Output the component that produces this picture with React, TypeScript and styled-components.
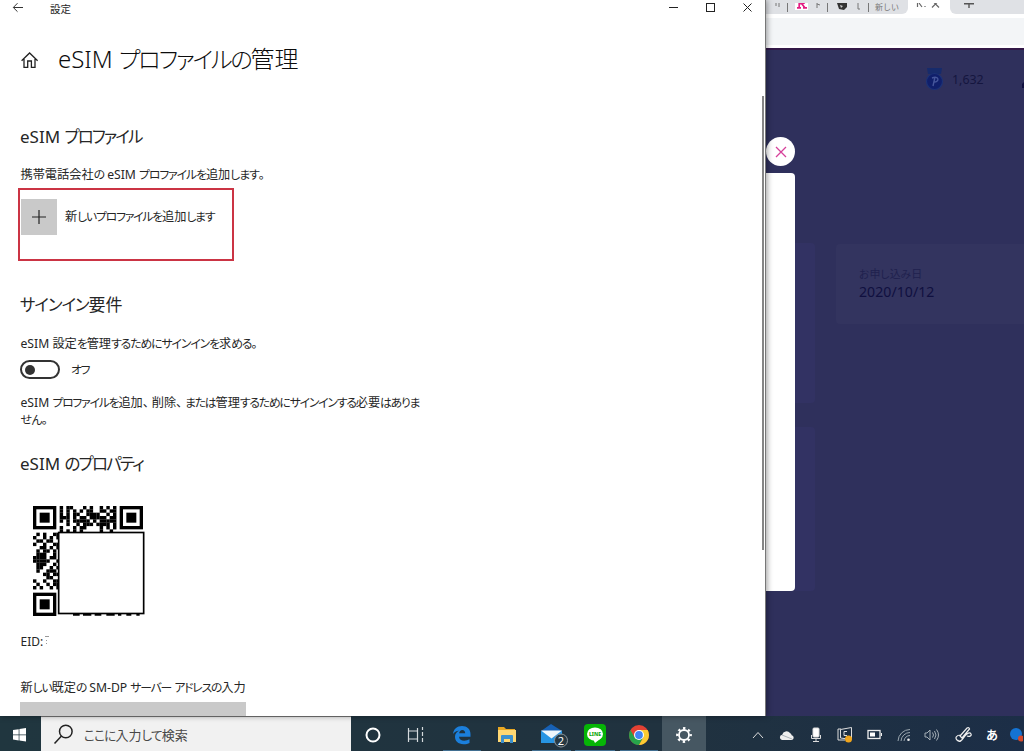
import React from "react";
import styled, { createGlobalStyle } from "styled-components";

const GlobalStyle = createGlobalStyle`
  * { box-sizing: border-box; }
  body { margin: 0; overflow: hidden; background: #fff; }
`;

const Screen = styled.div`
  width: 1024px;
  height: 751px;
  display: flex;
  flex-direction: column;
  overflow: hidden;
  font-family: "Noto Sans", "Noto Sans CJK JP", sans-serif;
  color: #262626;
`;

const Desktop = styled.div`
  height: 716px;
  display: flex;
`;

/* ---------- Japanese text with narrow kana ---------- */

const Line = styled.div<{ $size: number; $line: number; $weight?: number; $top?: number; $left?: number; $color?: string }>`
  font-size: ${(p) => p.$size}px;
  line-height: ${(p) => p.$line}px;
  height: ${(p) => p.$line}px;
  font-weight: ${(p) => p.$weight ?? 400};
  margin-top: ${(p) => p.$top ?? 0}px;
  margin-left: ${(p) => p.$left ?? 0}px;
  color: ${(p) => p.$color ?? "inherit"};
  white-space: pre;
`;

const Kana = styled.span<{ $tight: number }>`
  font-size: 0.97em;
  font-feature-settings: "palt";
  letter-spacing: ${(p) => p.$tight}em;
`;

const Stop = styled.span`
  letter-spacing: -0.27em;
`;

type CopyProps = {
  text: string;
  size: number;
  line: number;
  tight?: number;
  weight?: number;
  top?: number;
  left?: number;
  color?: string;
};

function Copy({ text, size, line, tight = -0.1, weight, top, left, color }: CopyProps) {
  const runs = text.split(/([\u3040-\u30ff]+|[、。]+)/);
  return (
    <Line $size={size} $line={line} $weight={weight} $top={top} $left={left} $color={color}>
      {runs.map((run, i) => {
        if (i % 2 === 0) return run;
        return /[、。]/.test(run) ? <Stop key={i}>{run}</Stop> : <Kana key={i} $tight={tight}>{run}</Kana>;
      })}
    </Line>
  );
}

/* ---------- Settings window ---------- */

const Window = styled.section`
  position: relative;
  z-index: 1;
  width: 766px;
  height: 716px;
  background: #fff;
  border-right: 1px solid #777;
  box-shadow: 1px 0 6px rgba(0, 0, 0, 0.4);
  display: flex;
  flex-direction: column;
  overflow: visible;
`;

const TitleBar = styled.header`
  height: 20px;
  display: flex;
  padding-left: 12px;
  align-items: flex-start;
`;

const WindowControls = styled.div`
  margin-left: auto;
  display: flex;
  gap: 26px;
  padding: 2px 12px 0 0;
`;

const WindowBody = styled.div`
  display: flex;
  flex: 1;
`;

const Content = styled.main`
  width: 761px;
  height: 696px;
  padding-left: 20px;
  overflow: hidden;
`;

const ScrollThumb = styled.div`
  width: 2px;
  height: 454px;
  margin: 76px 0 0 1px;
  background: #858585;
`;

const PageHead = styled.div`
  display: flex;
  height: 40px;
  margin-top: 19px;
`;

const Highlight = styled.div`
  width: 216px;
  height: 73px;
  margin: 5px 0 0 -2px;
  border: 2px solid #cb3444;
  display: flex;
  padding: 9px 0 0 1px;
`;

const AddTile = styled.div`
  width: 36px;
  height: 36px;
  background: #c9c9c9;
  display: flex;
  align-items: center;
  justify-content: center;
`;

const ToggleRow = styled.div`
  display: flex;
  height: 20px;
  margin-top: 8px;
`;

const Toggle = styled.div`
  width: 40px;
  height: 19px;
  border: 2px solid #333;
  border-radius: 10px;
  display: flex;
  align-items: center;
  padding-left: 3px;
`;

const Knob = styled.i`
  width: 10px;
  height: 10px;
  border-radius: 50%;
  background: #333;
`;

const QrWrap = styled.div`
  height: 111px;
  margin: 30px 0 0 13px;
`;

const EidRow = styled.div`
  display: flex;
  align-items: flex-start;
  margin-top: 16px;
`;

const Field = styled.div`
  width: 226px;
  height: 15px;
  margin-top: 6px;
  background: #c9c9c9;
`;

const TOP_STRIP = [
  "#.##...#.#..#.#.#",
  "#.#.#.#.##..##.##",
  "#.#.##..####..#.#",
  "###.#.##.#####.##",
  "#.#.#####.#.#####",
  "..#..#.###.####.#",
  "#...#.##....#.#.#",
  "#.#.#.#.....#..#.",
];
const LEFT_STRIP = [
  ".#.#..##", "#..#.#.#", ".##.##..", "#..#..##", "..##.#.#", ".#.##.#.", ".###..#.", "####.##.",
  "#####..#", ".###..#.", ".##..#.#", ".#..###.", "...##.##", "....##..", "#..#..##", ".#..#.##", "#.#..#.#",
];

function Modules({ rows, x, y }: { rows: string[]; x: number; y: number }) {
  return (
    <>
      {rows.flatMap((row, r) =>
        [...row].map((c, i) => (c === "#" ? <rect key={`${r}-${i}`} x={x + i} y={y + r} width="1.03" height="1.03" /> : null))
      )}
    </>
  );
}

function Finder({ x, y }: { x: number; y: number }) {
  return (
    <g>
      <rect x={x + 0.5} y={y + 0.5} width="6" height="6" fill="none" stroke="#000" />
      <rect x={x + 2} y={y + 2} width="3" height="3" />
    </g>
  );
}

function QrCode() {
  return (
    <svg width="112" height="110" viewBox="0 0 33.6 33">
      <Finder x={0} y={0} />
      <Finder x={26} y={0} />
      <Finder x={0} y={26} />
      <Modules rows={TOP_STRIP} x={8} y={0} />
      <Modules rows={LEFT_STRIP} x={0} y={8} />
      <rect x="7.7" y="7.95" width="25.5" height="24.3" fill="#fff" stroke="#000" strokeWidth="0.5" />
      <path d="M12 32.6h2M15 32.6h2.5M18.5 32.6h2M22 32.6h2.5M25.5 32.6h1M28 32.6h1.5M31 32.6h1" stroke="#000" strokeWidth="0.6" />
    </svg>
  );
}

/* ---------- Browser behind ---------- */

const Browser = styled.section`
  width: 258px;
  height: 716px;
  background: #2f305c;
  overflow: hidden;
`;

const Tabs = styled.div`
  height: 14px;
  background: #fff;
  display: flex;
  color: #777;
`;

const TabGroup = styled.div<{ $w: number; $side: "left" | "right" }>`
  width: ${(p) => p.$w}px;
  height: 14px;
  background: #dfe1e5;
  border-radius: ${(p) => (p.$side === "left" ? "0 0 6px 0" : "0 0 0 6px")};
  overflow: hidden;
`;

const ActiveTab = styled.div`
  width: 42px;
`;

const AddressBar = styled.div`
  height: 34px;
  background: #f3f5f7;
  border-top: 4px solid #fff;
  border-bottom: 3px solid #fff;
`;

const Page = styled.div`
  height: 668px;
  border-top: 2px solid #331848;
  display: flex;
`;

const ModalColumn = styled.div`
  width: 49px;
  padding-top: 87px;
`;

const CloseBadge = styled.div`
  width: 29px;
  height: 29px;
  border-radius: 50%;
  background: #fff;
  display: flex;
  align-items: center;
  justify-content: center;
`;

const ModalRow = styled.div`
  display: flex;
  margin-top: 7px;
`;

const ModalSheet = styled.div`
  width: 29px;
  height: 418px;
  flex: none;
  background: #fff;
  border-radius: 0 4px 4px 0;
`;

const DimCards = styled.div`
  width: 20px;
  padding-top: 70px;
`;

const DimCard = styled.div<{ $h: number; $gap: number }>`
  height: ${(p) => p.$h}px;
  margin-bottom: ${(p) => p.$gap}px;
  background: #323263;
  border-radius: 0 4px 4px 0;
`;

const InfoColumn = styled.div`
  width: 209px;
  padding-top: 15px;
`;

const Points = styled.div`
  display: flex;
  height: 28px;
  padding-left: 110px;
`;

const PointsValue = styled.span`
  width: 42px;
  font-size: 12.4px;
  line-height: 29px;
  color: #15163f;
  margin-left: 7px;
`;

const InfoCard = styled.div`
  height: 80px;
  margin: 151px 0 0 21px;
  padding: 21px 0 0 23px;
  background: #33345f;
  border-radius: 4px 0 0 4px;
`;

const InfoDate = styled.div`
  font-size: 14.1px;
  line-height: 19px;
  letter-spacing: 0.05px;
  color: #10103f;
`;

/* ---------- Taskbar ---------- */

const Taskbar = styled.footer`
  height: 35px;
  display: flex;
  background: linear-gradient(90deg, #20363f, #20323f 65%, #1c2e47);
`;

const StartButton = styled.div`
  display: flex;
  width: 41px;
  padding: 12px 0 0 13px;
`;

const SearchBox = styled.div`
  width: 310px;
  background: #f1f1f1;
  border-top: 1px solid #777;
  display: flex;
  padding-left: 12px;
`;

const AppSlot = styled.div<{ $w: number; $active?: boolean; $running?: boolean }>`
  width: ${(p) => p.$w}px;
  height: 35px;
  flex: none;
  display: flex;
  align-items: center;
  justify-content: center;
  padding-top: 2px;
  background: ${(p) => (p.$active ? "#465762" : "transparent")};
  box-shadow: ${(p) => (p.$running ? "inset 0 -1px #416f91" : "none")};
`;

const Tray = styled.div`
  display: flex;
  width: 318px;
  overflow: hidden;
`;

const TraySlot = styled.div<{ $w: number }>`
  width: ${(p) => p.$w}px;
  height: 35px;
  flex: none;
  display: flex;
  align-items: center;
  justify-content: center;
  padding-top: 3px;
  color: #fff;
  font-size: 12px;
  font-weight: 700;
`;

export default function App() {
  return (
    <Screen>
      <GlobalStyle />
      <Desktop>
        <Window>
          <TitleBar>
            <svg width="12" height="14" viewBox="0 0 12 14" fill="none" stroke="#333">
              <path d="M11 7.5H1.5M5.5 3.2 1.3 7.5l4.2 4.2" />
            </svg>
            <Copy text="設定" size={10.5} line={18} left={26} />
            <WindowControls>
              <svg width="11" height="11" fill="none" stroke="#222"><path d="M1 5.5h9" /></svg>
              <svg width="11" height="11" fill="none" stroke="#222"><rect x="1.5" y="1.5" width="8" height="8" /></svg>
              <svg width="11" height="11" fill="none" stroke="#222"><path d="m1.5 1.5 8 8m0-8-8 8" /></svg>
            </WindowControls>
          </TitleBar>
          <WindowBody>
            <Content>
              <PageHead>
                <svg width="19" height="40" viewBox="0 0 19 40" fill="none" stroke="#222" strokeWidth="1.3">
                  <path d="m1.6 21.8 8-7.8 8 7.8M4 20v8.4h3.7V22h3.7v6.4H15V20" />
                </svg>
                <Copy text="eSIM プロファイルの管理" size={24} line={40} weight={300} left={19} tight={-0.095} color="#0c0c0c" />
              </PageHead>
              <Copy text="eSIM プロファイル" size={17} line={24} top={46} tight={-0.115} />
              <Copy text="携帯電話会社の eSIM プロファイルを追加します。" size={12.2} line={18} top={16} left={0.5} tight={-0.09} />
              <Highlight>
                <AddTile>
                  <svg width="16" height="16" fill="none" stroke="#222" strokeWidth="1.2"><path d="M1 8h14M8 1v14" /></svg>
                </AddTile>
                <Copy text="新しいプロファイルを追加します" size={12.2} line={35} left={8} />
              </Highlight>
              <Copy text="サインイン要件" size={17} line={24} top={32} tight={-0.065} />
              <Copy text="eSIM 設定を管理するためにサインインを求める。" size={12.2} line={18} top={17} left={0.5} tight={-0.09} />
              <ToggleRow>
                <Toggle><Knob /></Toggle>
                <Copy text="オフ" size={12.2} line={19} left={11} />
              </ToggleRow>
              <Copy text="eSIM プロファイルを追加、削除、または管理するためにサインインする必要はありま" size={12.2} line={17} top={14} left={0.5} />
              <Copy text="せん。" size={12.2} line={17} left={0.5} tight={-0.05} />
              <Copy text="eSIM のプロパティ" size={17} line={24} top={24} tight={-0.11} />
              <QrWrap><QrCode /></QrWrap>
              <EidRow>
                <Copy text="EID:" size={12} line={18} left={0.5} />
                <svg width="8" height="14" fill="none" stroke="#999"><path d="M2 3.5h4M3.5 7v1M3.5 10v1" /></svg>
              </EidRow>
              <Copy text="新しい既定の SM-DP サーバー アドレスの入力" size={12.2} line={18} top={27} left={0.5} />
              <Field />
            </Content>
            <ScrollThumb />
          </WindowBody>
        </Window>
        <Browser>
          <Tabs>
            <TabGroup $w={142} $side="left">
              <svg width="142" height="14">
                <g stroke="#777" fill="none">
                  <path d="M10 0v3M13 0v4M21.500 0v9M61.500 0v9M102.500 0v9M51 0v5M51 1l3 1M92 0v6h2" />
                </g>
                <rect x="29" y="0" width="13" height="7" fill="#fff" />
                <path d="M31 4.800h4M37 4.800h4M33.200 0v4.500M35.500 .5 38.700 4.500M33 .7h3.500q2-.2 2-1.500" fill="none" stroke="#e21d82" strokeWidth="1.7" />
                <path d="M71 0h10v4l-3 3-5-1z" fill="#333" />
                <path d="m74 2 3 1-2 2z" fill="#ccc" />
                <text x="109" y="7" fontSize="8" fill="#777">新しい</text>
              </svg>
            </TabGroup>
            <ActiveTab>
              <svg width="42" height="14" fill="none" stroke="#666">
                <path d="M9.500 0v4M11 0l3 4M17 3v1M24 4.500l6-6M31 4.500l-6-6" strokeWidth="1.2" />
              </svg>
            </ActiveTab>
            <TabGroup $w={74} $side="right">
              <svg width="40" height="14" stroke="#555" strokeWidth="1.4"><path d="M14 .7h10M19 0v5" /></svg>
            </TabGroup>
          </Tabs>
          <AddressBar />
          <Page>
            <ModalColumn>
              <CloseBadge>
                <svg width="12" height="12" stroke="#d6409a" strokeWidth="1.3"><path d="m1 1 10 10M11 1 1 11" /></svg>
              </CloseBadge>
              <ModalRow>
                <ModalSheet />
                <DimCards>
                  <DimCard $h={160} $gap={24} />
                  <DimCard $h={164} $gap={0} />
                </DimCards>
              </ModalRow>
            </ModalColumn>
            <InfoColumn>
              <Points>
                <svg width="20" height="28" viewBox="0 0 20 28">
                  <path d="M2 3h15l-1 6H3z" fill="#172b6b" />
                  <circle cx="9.500" cy="16.500" r="8" fill="#101f6b" stroke="#1c3277" strokeWidth="1.2" />
                  <path d="M8 21l2-9M7 13c7-3 8 4 2 4" fill="none" stroke="#46569b" strokeWidth="1.4" />
                </svg>
                <PointsValue>1,632</PointsValue>
                <svg width="30" height="28"><path d="M28 23v-4l3-3v7z" fill="#10103f" /></svg>
              </Points>
              <InfoCard>
                <Copy text="お申し込み日" size={11} line={17} color="#20214e" tight={0.02} />
                <InfoDate>2020/10/12</InfoDate>
              </InfoCard>
            </InfoColumn>
          </Page>
        </Browser>
      </Desktop>
      <Taskbar>
        <StartButton>
          <svg width="14" height="14" fill="#fff">
            <path d="M0 2 5.700 1.200V6.500H0zM6.400 1.100 13 0v6.500H6.400zM0 7.200h5.700v5.200L0 11.600zM6.400 7.200H13v6.300l-6.600-1z" />
          </svg>
        </StartButton>
        <SearchBox>
          <svg width="20" height="34" fill="none" stroke="#222" strokeWidth="1.5">
            <circle cx="12.800" cy="14.500" r="6.300" /><path d="m8.500 19-7 7.500" />
          </svg>
          <Copy text="ここに入力して検索" size={13} line={36} left={11} color="#484848" tight={-0.065} />
        </SearchBox>
        <AppSlot $w={43}>
          <svg width="18" height="18"><circle cx="9" cy="9" r="6.500" fill="none" stroke="#fff" strokeWidth="2" /></svg>
        </AppSlot>
        <AppSlot $w={43}>
          <svg width="20" height="16" fill="none" stroke="#d5dadd" strokeWidth="1.200">
            <path d="M2.500 1v3h9V1M2.500 15v-3h9v3M2.500 4v8M11.500 4v8M16.500 0v3M16.500 5v4M16.500 11v4" />
          </svg>
        </AppSlot>
        <AppSlot $w={6} />
        <AppSlot $w={38} $running>
          <svg width="20" height="20" viewBox="0 0 20 20">
            <path d="M1 9C1.500 4 5 1 10 1c5 0 8.500 3.200 8.500 8v2.700H7c.2 2.800 2.400 4 5.200 4 2 0 3.800-.5 5.300-1.400v3.600C16 18.700 14 19.200 11.500 19.200 6 19.200 3 16 3 11.800 3 9 4.500 7 7 5.800 4.500 5.700 2.300 7 1 9zm6.100-.7h6.100C13.200 6.500 12.200 5 10.300 5 8.500 5 7.400 6.500 7.100 8.300z" fill="#1b7fdc" />
          </svg>
        </AppSlot>
        <AppSlot $w={51}>
          <svg width="20" height="18">
            <path d="M1 1h6l2 2h9v13H1z" fill="#e9a823" /><path d="M1 4h18v12H1z" fill="#ffd873" />
            <path d="M4 17V10q0-1 1-1h10q1 0 1 1v7h-3v-4H7v4z" fill="#3c91cf" />
          </svg>
        </AppSlot>
        <AppSlot $w={39} $running>
          <svg width="32" height="28" viewBox="-4 0 32 28">
            <path d="m1 10 10-7 11 7v12H1z" fill="#1761b5" /><path d="M1 10h21v12H1z" fill="#2795e3" />
            <path d="M1 9.500h21l-10.500 8z" fill="#eef7fc" />
            <circle cx="21" cy="19.500" r="6.500" fill="#263842" stroke="#8b969c" />
            <text x="21" y="23.500" textAnchor="middle" fontSize="11" fill="#fff">2</text>
          </svg>
        </AppSlot>
        <AppSlot $w={4} />
        <AppSlot $w={40} $running>
          <svg width="22" height="22">
            <rect width="22" height="22" rx="4" fill="#06b506" />
            <ellipse cx="11" cy="10" rx="8" ry="6.600" fill="#fff" /><path d="M9 15h7l-5 4z" fill="#fff" />
            <text x="11" y="12.200" textAnchor="middle" fontSize="5.200" fontWeight="800" fill="#06a506">LINE</text>
          </svg>
        </AppSlot>
        <AppSlot $w={5} />
        <AppSlot $w={38} $running>
          <svg width="22" height="22" viewBox="-11 -11 22 22">
            <circle r="10" fill="#e34133" />
            <path d="M-8.660-5A10 10 0 0 0 0 10L4.330 2.500 0 0-4.330 2.500z" fill="#27a34b" />
            <path d="M8.660-5A10 10 0 0 1 0 10L4.330 2.500 0-5z" fill="#fccb32" />
            <circle r="5" fill="#fff" /><circle r="3.900" fill="#4285f4" />
          </svg>
        </AppSlot>
        <AppSlot $w={4} />
        <AppSlot $w={44} $active>
          <svg width="18" height="18" viewBox="-9 -9 18 18" fill="none" stroke="#fff">
            <circle r="5" strokeWidth="1.800" /><circle r="6.700" strokeWidth="2.400" strokeDasharray="2.400 2.862" strokeDashoffset="1.200" />
          </svg>
        </AppSlot>
        <Tray>
          <AppSlot $w={38} />
          <TraySlot $w={28}><svg width="12" height="8" fill="none" stroke="#ddd"><path d="m1 7 5-5.500L11 7" /></svg></TraySlot>
          <TraySlot $w={30}>
            <svg width="16" height="11"><path d="M3 10a2.700 2.700 0 0 1 .2-5.300A4.500 4.500 0 0 1 11 3a3 3 0 0 1 1.700 2.200A2.500 2.500 0 0 1 13 10z" fill="#eee" /><path d="m3 5 10 4" stroke="#aab2b8" /></svg>
          </TraySlot>
          <TraySlot $w={28}>
            <svg width="12" height="16" fill="none" stroke="#ddd"><rect x="3" y="1" width="6" height="9" rx="1" fill="#fff" /><path d="M1.500 8v3.500h9V8M6 12v3M3 14.500h6" /></svg>
          </TraySlot>
          <TraySlot $w={30}>
            <svg width="18" height="18" fill="none" stroke="#ddd"><path d="M5 3H2v11h7M4.500 3.500 15.500 1.500v12l-11-1.500zM8 5.500v4M8 5.500h3M8 9.500h3" /><circle cx="12.500" cy="13" r="3.500" fill="#f0a51c" stroke="none" /></svg>
          </TraySlot>
          <TraySlot $w={29}>
            <svg width="16" height="12" fill="none" stroke="#eee"><rect x="1" y="1.500" width="12" height="8" strokeWidth="1.300" /><path d="M14.500 4v3" /><path d="M3 3.500h5v4H3z" fill="#fff" stroke="none" /></svg>
          </TraySlot>
          <TraySlot $w={29}>
            <svg width="14" height="14" fill="none" stroke="#9ba7af"><path d="M1 13A12 12 0 0 1 13 1.500M4 13a9 9 0 0 1 9-8.500M7 13a6 6 0 0 1 6-5.500" /><circle cx="11.500" cy="11.800" r="1.300" fill="#eee" stroke="none" /></svg>
          </TraySlot>
          <TraySlot $w={27}>
            <svg width="16" height="14" fill="none" stroke="#a5afb7"><path d="M1 5v4h2l3 3V2L3 5zM8.500 4.500q2 2.500 0 5M10.500 3q3 4 0 8M12.500 1.500q4 5.500 0 11" /></svg>
          </TraySlot>
          <TraySlot $w={38}>
            <svg width="18" height="18" fill="none" stroke="#eee" strokeWidth="1.200"><path d="M5 10 12 2q2-1 2.500 1L7 12zM6 9c-5 0-6 3-4 5 3 3 6-1 8-4s5-4 6-2-2 3-4 2M3 14c1 3 4 1 5-2" /></svg>
          </TraySlot>
          <TraySlot $w={18}>あ</TraySlot>
          <TraySlot $w={30}>
            <svg width="14" height="16"><circle cx="7" cy="7" r="6" fill="#1473d3" /><circle cx="12" cy="11.500" r="3" fill="#d44a2c" /></svg>
          </TraySlot>
        </Tray>
      </Taskbar>
    </Screen>
  );
}
